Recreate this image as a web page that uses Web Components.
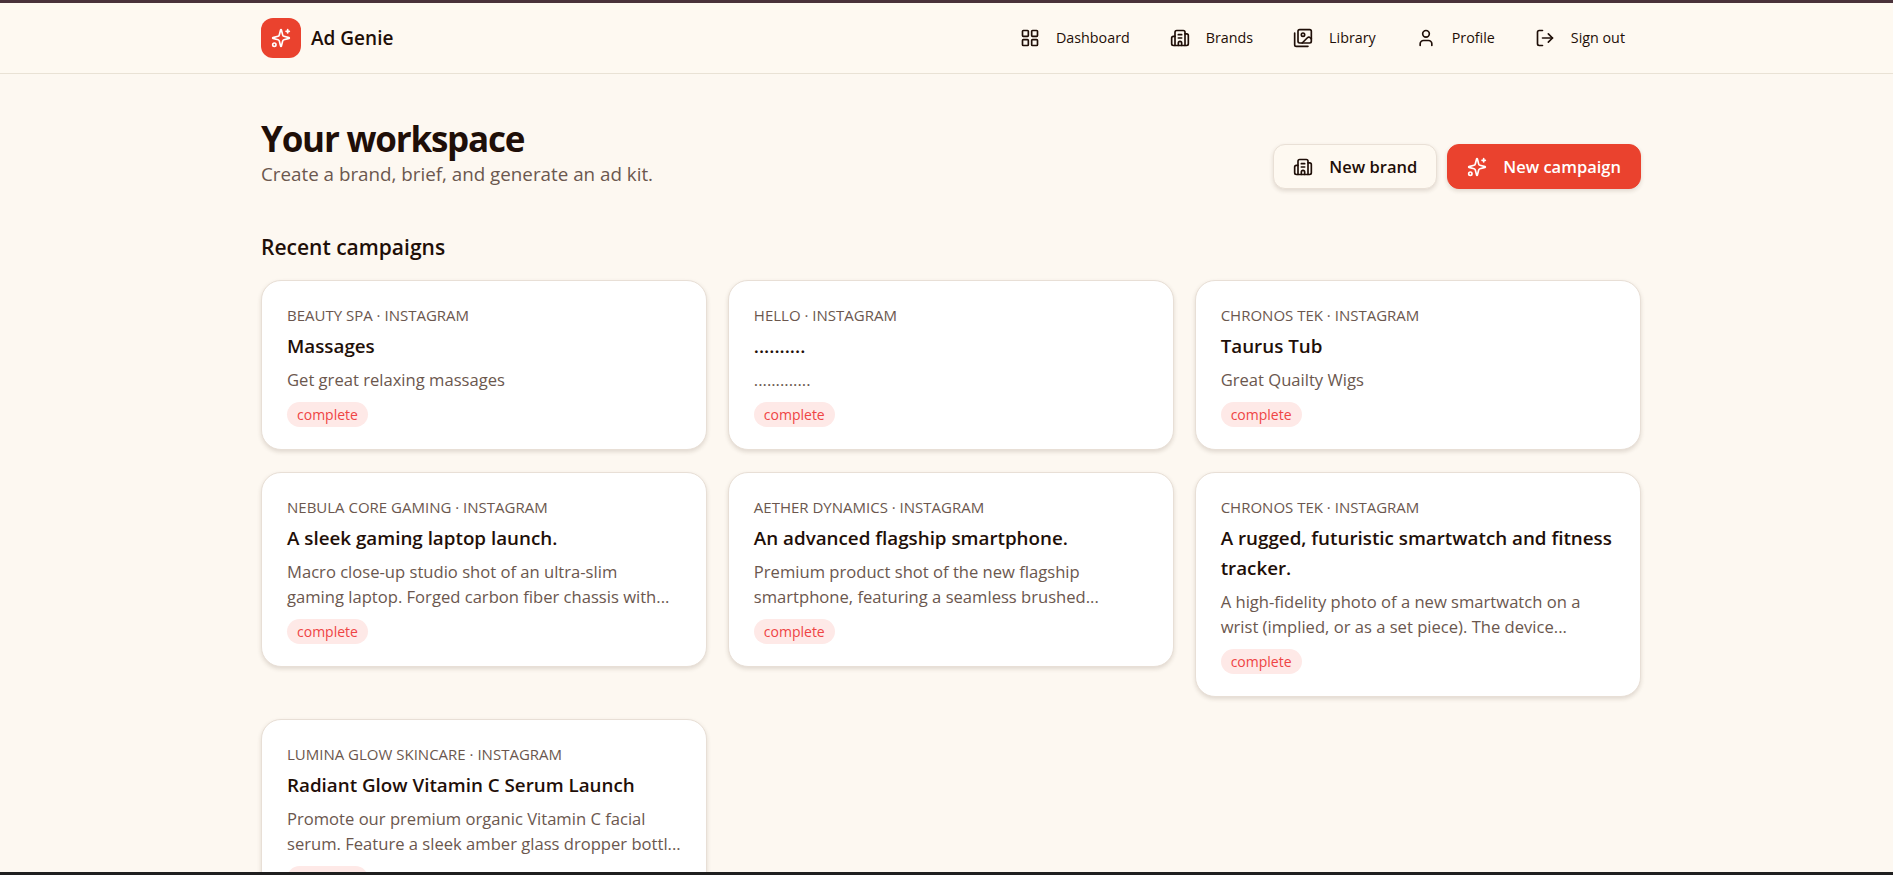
<!DOCTYPE html>
<html lang="en">
<head>
<meta charset="utf-8">
<title>Ad Genie</title>
<style>
  html, body { margin: 0; height: 100%; overflow: hidden; background: #fdf8f1; }
  body {
    display: flex;
    flex-direction: column;
    font-family: "Open Sans", "Noto Sans", sans-serif;
    color: #1f0f08;
  }
  .top-edge { flex: none; height: 3px; background: #4a323a; }
  .bottom-edge { flex: none; height: 3px; background: #1f1f1f; }
  ag-workspace { flex: 1; min-height: 0; }
</style>
</head>
<body>
<div class="top-edge"></div>
<ag-workspace>
  <ag-header>
    <ag-nav-link icon="grid">Dashboard</ag-nav-link>
    <ag-nav-link icon="building">Brands</ag-nav-link>
    <ag-nav-link icon="images">Library</ag-nav-link>
    <ag-nav-link icon="user">Profile</ag-nav-link>
    <ag-nav-link icon="logout">Sign out</ag-nav-link>
  </ag-header>
  <ag-page-head slot="head">
    <ag-button icon="building">New brand</ag-button>
    <ag-button icon="sparkles" primary>New campaign</ag-button>
  </ag-page-head>
  <ag-campaign-card slot="card" meta="Beauty Spa · Instagram" heading="Massages" status="complete">Get great relaxing massages</ag-campaign-card>
  <ag-campaign-card slot="card" meta="hello · Instagram" heading=".........." status="complete">.............</ag-campaign-card>
  <ag-campaign-card slot="card" meta="Chronos Tek · Instagram" heading="Taurus Tub" status="complete">Great Quailty Wigs</ag-campaign-card>
  <ag-campaign-card slot="card" meta="Nebula Core Gaming · Instagram" heading="A sleek gaming laptop launch." status="complete">Macro close-up studio shot of an ultra-slim<br>gaming laptop. Forged carbon fiber chassis with...</ag-campaign-card>
  <ag-campaign-card slot="card" meta="Aether Dynamics · Instagram" heading="An advanced flagship smartphone." status="complete">Premium product shot of the new flagship<br>smartphone, featuring a seamless brushed...</ag-campaign-card>
  <ag-campaign-card slot="card" meta="Chronos Tek · Instagram" heading="A rugged, futuristic smartwatch and fitness tracker." status="complete">A high-fidelity photo of a new smartwatch on a<br>wrist (implied, or as a set piece). The device...</ag-campaign-card>
  <ag-campaign-card slot="card" meta="Lumina Glow Skincare · Instagram" heading="Radiant Glow Vitamin C Serum Launch" status="complete">Promote our premium organic Vitamin C facial<br>serum. Feature a sleek amber glass dropper bottl...</ag-campaign-card>
</ag-workspace>
<div class="bottom-edge"></div>

<script>
const ICONS = {
  sparkles: '<path d="M9.937 15.5A2 2 0 0 0 8.5 14.063l-6.135-1.582a.5.5 0 0 1 0-.962L8.5 9.936A2 2 0 0 0 9.937 8.5l1.582-6.135a.5.5 0 0 1 .963 0L14.063 8.5A2 2 0 0 0 15.5 9.937l6.135 1.581a.5.5 0 0 1 0 .964L15.5 14.063a2 2 0 0 0-1.437 1.437l-1.582 6.135a.5.5 0 0 1-.963 0z"/><path d="M20 2v4"/><path d="M22 4h-4"/><circle cx="4" cy="20" r="2"/>',
  grid: '<rect width="7" height="7" x="3" y="3" rx="1"/><rect width="7" height="7" x="14" y="3" rx="1"/><rect width="7" height="7" x="14" y="14" rx="1"/><rect width="7" height="7" x="3" y="14" rx="1"/>',
  building: '<path d="M10 12h4"/><path d="M10 8h4"/><path d="M14 21v-3a2 2 0 0 0-4 0v3"/><path d="M6 10H4a2 2 0 0 0-2 2v7a2 2 0 0 0 2 2h16a2 2 0 0 0 2-2V9a2 2 0 0 0-2-2h-2"/><path d="M6 21V5a2 2 0 0 1 2-2h8a2 2 0 0 1 2 2v16"/>',
  images: '<path d="M18 22H4a2 2 0 0 1-2-2V6"/><path d="m22 13-1.296-1.296a2.41 2.41 0 0 0-3.408 0L11 18"/><circle cx="12" cy="8" r="2"/><rect width="16" height="16" x="6" y="2" rx="2"/>',
  user: '<path d="M19 21v-2a4 4 0 0 0-4-4H9a4 4 0 0 0-4 4v2"/><circle cx="12" cy="7" r="4"/>',
  logout: '<path d="m16 17 5-5-5-5"/><path d="M21 12H9"/><path d="M9 21H5a2 2 0 0 1-2-2V5a2 2 0 0 1 2-2h4"/>'
};

class AgIcon extends HTMLElement {
  connectedCallback() {
    this.attachShadow({ mode: 'open' });
    const size = this.getAttribute('size') || 20;
    this.shadowRoot.innerHTML = `
      <style>
        :host { display: inline-flex; flex: none; }
        svg { display: block; fill: none; stroke: currentColor; stroke-width: 2; stroke-linecap: round; stroke-linejoin: round; }
      </style>
      <svg width="${size}" height="${size}" viewBox="0 0 24 24">${ICONS[this.getAttribute('name')]}</svg>
    `;
  }
}
customElements.define('ag-icon', AgIcon);

class AgWorkspace extends HTMLElement {
  connectedCallback() {
    this.attachShadow({ mode: 'open' });
    this.shadowRoot.innerHTML = `
      <style>
        :host { display: block; overflow: hidden; }
        .page { width: 1380px; margin-left: 261px; padding-top: 44px; }
        h2 { margin: 44px 0 19px; font-size: 21px; line-height: 28px; font-weight: 600; color: #1f0f08; }
        .grid { width: 1380px; display: grid; grid-template-columns: repeat(3, minmax(0, 1fr)); gap: 22px 20.5px; align-items: start; }
      </style>
      <slot></slot>
      <div class="page">
        <slot name="head"></slot>
        <h2>Recent campaigns</h2>
        <div class="grid"><slot name="card"></slot></div>
      </div>
    `;
  }
}
customElements.define('ag-workspace', AgWorkspace);

class AgHeader extends HTMLElement {
  connectedCallback() {
    this.attachShadow({ mode: 'open' });
    this.shadowRoot.innerHTML = `
      <style>
        :host { display: block; background: #fef9f1; border-bottom: 1px solid #e9e2d5; }
        .bar { width: 1380px; height: 70px; margin-left: 261px; display: flex; align-items: center; justify-content: space-between; }
        .brand { display: flex; align-items: center; gap: 10px; font-size: 19px; font-weight: 600; color: #1f0f08; }
        .tile { width: 40px; height: 40px; border-radius: 12px; background: #ea422e; color: #fff; display: flex; align-items: center; justify-content: center; }
        nav { display: flex; gap: 8px; }
      </style>
      <div class="bar">
        <div class="brand"><span class="tile"><ag-icon name="sparkles" size="20"></ag-icon></span>Ad Genie</div>
        <nav><slot></slot></nav>
      </div>
    `;
  }
}
customElements.define('ag-header', AgHeader);

class AgNavLink extends HTMLElement {
  connectedCallback() {
    this.attachShadow({ mode: 'open' });
    this.shadowRoot.innerHTML = `
      <style>
        :host { display: flex; align-items: center; gap: 16px; padding: 8px 16px; font-size: 14.3px; line-height: 20px; font-weight: 500; color: #1f0f08; }
      </style>
      <ag-icon name="${this.getAttribute('icon')}"></ag-icon><slot></slot>
    `;
  }
}
customElements.define('ag-nav-link', AgNavLink);

class AgPageHead extends HTMLElement {
  connectedCallback() {
    this.attachShadow({ mode: 'open' });
    this.shadowRoot.innerHTML = `
      <style>
        :host { display: flex; align-items: flex-end; justify-content: space-between; }
        .text { padding-bottom: 1px; }
        h1 { margin: 0; font-size: 35px; line-height: 42px; font-weight: 700; letter-spacing: -1.2px; color: #1f0f08; }
        p { margin: 0; font-size: 18.8px; line-height: 28px; color: #6b574e; }
        .actions { display: flex; gap: 10px; }
      </style>
      <div class="text">
        <h1>Your workspace</h1>
        <p>Create a brand, brief, and generate an ad kit.</p>
      </div>
      <div class="actions"><slot></slot></div>
    `;
  }
}
customElements.define('ag-page-head', AgPageHead);

class AgButton extends HTMLElement {
  connectedCallback() {
    this.attachShadow({ mode: 'open' });
    this.shadowRoot.innerHTML = `
      <style>
        :host { display: flex; align-items: center; gap: 16px; height: 45px; box-sizing: border-box; padding: 0 19px; border: 1px solid #e9e0d6; border-radius: 12px; background: #fef9f1; box-shadow: 0 2px 4px rgba(60, 40, 20, .15); font-size: 16.5px; font-weight: 600; color: #1f0f08; }
        :host([primary]) { background: #ea422e; border-color: #ea422e; color: #fff; }
      </style>
      <ag-icon name="${this.getAttribute('icon')}"></ag-icon><slot></slot>
    `;
  }
}
customElements.define('ag-button', AgButton);

class AgCampaignCard extends HTMLElement {
  connectedCallback() {
    this.attachShadow({ mode: 'open' });
    this.shadowRoot.innerHTML = `
      <style>
        :host { display: block; box-sizing: border-box; padding: 24px 25px 22px; background: #fff; border: 1px solid #e8dfd6; border-radius: 20px; box-shadow: 0 2px 4px rgba(60, 40, 20, .15); }
        .meta { font-size: 15px; line-height: 20px; text-transform: uppercase; color: #6b574e; }
        h3 { margin: 6px 0 0; font-size: 18.8px; line-height: 30px; font-weight: 600; color: #1f0f08; }
        .desc { margin-top: 6px; font-size: 16.6px; line-height: 25px; white-space: nowrap; color: #6b574e; }
        .pill { display: block; width: fit-content; box-sizing: border-box; margin-top: 10px; padding: 0 10px; height: 25px; line-height: 25px; border-radius: 999px; background: #fee9e7; font-size: 14px; color: #ef4444; }
      </style>
      <div class="meta">${this.getAttribute('meta')}</div>
      <h3>${this.getAttribute('heading')}</h3>
      <div class="desc"><slot></slot></div>
      <span class="pill">${this.getAttribute('status')}</span>
    `;
  }
}
customElements.define('ag-campaign-card', AgCampaignCard);
</script>
</body>
</html>
